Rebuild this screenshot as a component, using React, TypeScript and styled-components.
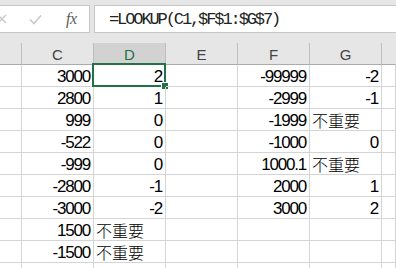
import React from 'react';
import styled, { createGlobalStyle } from 'styled-components';

const GlobalStyle = createGlobalStyle`
    html, body {
        margin: 0;
        padding: 0;
        background: #ffffff;
        overflow: hidden;
    }
    body {
        font-family: 'Liberation Sans', Arial, sans-serif;
    }
`;

const COL_W = 72;
const ROW_H = 22;
const GRID = '#d4d4d4';
const GREEN = '#217346';

const Sheet = styled.div`
    width: 396px;
    height: 268px;
    overflow: hidden;
    display: flex;
    flex-direction: column;
    background: #ffffff;
`;

const FormulaBar = styled.div`
    height: 43px;
    flex: none;
    background: #e6e6e6;
    display: flex;
    align-items: flex-start;
    padding-top: 5px;
    box-sizing: border-box;
    gap: 4px;
`;

const IconBox = styled.div`
    width: 91px;
    height: 28px;
    margin-left: -1px;
    background: #ffffff;
    border: 1px solid #c6c6c6;
    box-sizing: border-box;
    display: flex;
    align-items: center;
    position: relative;
`;

const IconSlot = styled.span<{ $left: number }>`
    position: absolute;
    left: ${(p) => p.$left}px;
    top: 0;
    bottom: 0;
    display: flex;
    align-items: center;
`;

const Fx = styled.span`
    font-family: 'Liberation Serif', 'Times New Roman', serif;
    font-style: italic;
    font-size: 16px;
    color: #5a5a5a;
    letter-spacing: -0.5px;
`;

const FormulaInput = styled.div`
    flex: 1;
    height: 28px;
    background: #ffffff;
    border: 1px solid #c6c6c6;
    border-right: none;
    box-sizing: border-box;
    display: flex;
    align-items: center;
    padding-left: 14px;
    font-family: 'Liberation Mono', 'Courier New', monospace;
    font-size: 17px;
    letter-spacing: -2.1px;
    color: #222;
    white-space: nowrap;
`;

const Row = styled.div<{ $h?: number }>`
    display: grid;
    grid-template-columns: 22px repeat(5, ${COL_W}px) 1fr;
    height: ${(p) => p.$h ?? ROW_H}px;
    flex: none;
`;

const HeadCell = styled.div<{ $active?: boolean; $blank?: boolean }>`
    box-sizing: border-box;
    background: ${(p) => (p.$active ? '#d2d2d2' : '#e6e6e6')};
    border-right: 1px solid ${(p) => (p.$blank ? '#e6e6e6' : '#bdbdbd')};
    border-bottom: 1px solid ${(p) => (p.$active ? GREEN : '#ababab')};
    color: ${(p) => (p.$active ? GREEN : '#444444')};
    font-size: 15px;
    display: flex;
    align-items: center;
    justify-content: center;
    padding-top: 2px;
`;

const Cell = styled.div<{ $align?: 'left' | 'right' }>`
    box-sizing: border-box;
    border-right: 1px solid ${GRID};
    border-bottom: 1px solid ${GRID};
    position: relative;
    display: flex;
    align-items: flex-end;
    justify-content: ${(p) => (p.$align === 'left' ? 'flex-start' : 'flex-end')};
    padding: 0 3px 0 2px;
    font-size: 17px;
    line-height: 19px;
    letter-spacing: -1.2px;
    color: #000;
    white-space: nowrap;
`;

const Cjk = styled.span`
    font-family: 'Noto Sans CJK TC', 'Noto Sans CJK SC', sans-serif;
    font-size: 16px;
    font-weight: 300;
    letter-spacing: 0;
    line-height: 20px;
`;

const Selection = styled.div`
    position: absolute;
    top: -2px;
    left: -2px;
    right: -1px;
    bottom: -1px;
    border: 2px solid ${GREEN};
    pointer-events: none;
`;

const FillHandle = styled.div`
    position: absolute;
    right: -5px;
    bottom: -5px;
    width: 6px;
    height: 6px;
    background: ${GREEN};
    border: 1px solid #ffffff;
`;

type V = string | number | null;

const rows: V[][] = [
    [3000, 2, null, -99999, -2],
    [2800, 1, null, -2999, -1],
    [999, 0, null, -1999, '不重要'],
    [-522, 0, null, -1000, 0],
    [-999, 0, null, '1000.1', '不重要'],
    [-2800, -1, null, 2000, 1],
    [-3000, -2, null, 3000, 2],
    [1500, '不重要', null, null, null],
    [-1500, '不重要', null, null, null],
    [null, null, null, null, null],
];

const isText = (v: V) => typeof v === 'string' && /[^\d.\-]/.test(v);

const renderValue = (v: V) => {
    if (v === null) return null;
    if (isText(v)) return <Cjk>{v}</Cjk>;
    return String(v);
};

export default function App() {
    return (
        <>
            <GlobalStyle />
            <Sheet>
                <FormulaBar>
                    <IconBox>
                        <IconSlot $left={-3}>
                            <svg width="10" height="10" viewBox="0 0 10 10">
                                <path d="M1 1 L9 9 M9 1 L1 9" stroke="#c8c8c8" strokeWidth="1.4" fill="none" />
                            </svg>
                        </IconSlot>
                        <IconSlot $left={29}>
                            <svg width="13" height="11" viewBox="0 0 13 11">
                                <path d="M1 5.5 L5 9.5 L12 1.5" stroke="#c8c8c8" strokeWidth="1.6" fill="none" />
                            </svg>
                        </IconSlot>
                        <IconSlot $left={66}>
                            <Fx>fx</Fx>
                        </IconSlot>
                    </IconBox>
                    <FormulaInput>=LOOKUP(C1,$F$1:$G$7)</FormulaInput>
                </FormulaBar>

                <Row>
                    <HeadCell />
                    {['C', 'D', 'E', 'F', 'G'].map((c) => (
                        <HeadCell key={c} $active={c === 'D'}>
                            {c}
                        </HeadCell>
                    ))}
                    <HeadCell $blank />
                </Row>

                {rows.map((r, i) => (
                    <Row key={i}>
                        <Cell />
                        {r.map((v, j) => (
                            <Cell key={j} $align={isText(v) ? 'left' : 'right'}>
                                {renderValue(v)}
                                {i === 0 && j === 1 && (
                                    <Selection>
                                        <FillHandle />
                                    </Selection>
                                )}
                            </Cell>
                        ))}
                        <Cell />
                    </Row>
                ))}
            </Sheet>
        </>
    );
}
